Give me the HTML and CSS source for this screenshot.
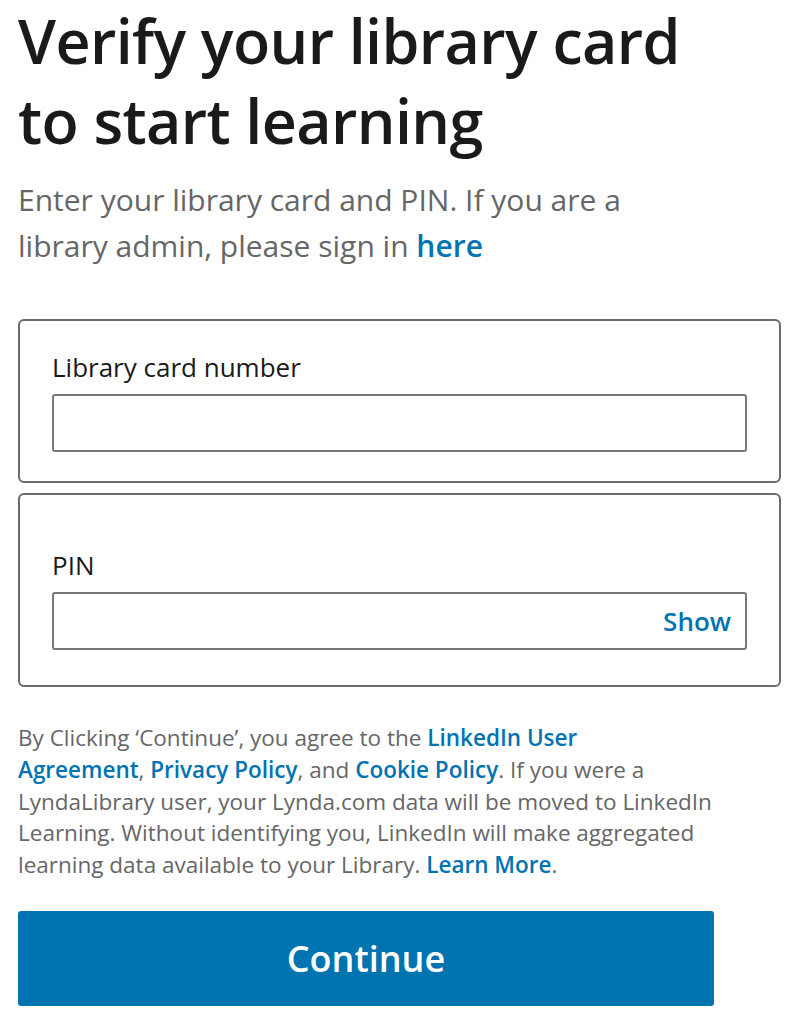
FILE: index.html
```html
<!DOCTYPE html>
<html lang="en">
<head>
<meta charset="utf-8">
<title>Verify your library card</title>
<link rel="stylesheet" href="styles.css">
</head>
<body>
<main class="page">
  <h1 class="title">Verify your library card<br>to start learning</h1>
  <p class="subtitle">Enter your library card and PIN. If you are a<br>library admin, please sign in <a class="link" href="#">here</a></p>
  <form class="form">
    <div class="card card-first">
      <label class="label" for="card">Library card number</label>
      <div class="field"><input class="input" id="card" type="text"></div>
    </div>
    <div class="card card-second">
      <label class="label" for="pin">PIN</label>
      <div class="field"><input class="input" id="pin" type="password"><span class="show">Show</span></div>
    </div>
    <p class="legal">By Clicking ‘Continue’, you agree to the <a class="link" href="#">LinkedIn User<br>Agreement</a>, <a class="link" href="#">Privacy Policy</a>, and <a class="link" href="#">Cookie Policy</a>. If you were a<br>LyndaLibrary user, your Lynda.com data will be moved to LinkedIn<br>Learning. Without identifying you, LinkedIn will make aggregated<br>learning data available to your Library. <a class="link" href="#">Learn More</a>.</p>
    <button class="button" type="button">Continue</button>
  </form>
</main>
</body>
</html>
```
FILE: styles.css
```css
* { box-sizing: border-box; }
html, body { margin: 0; padding: 0; background: #fff; }
body { font-family: "Open Sans", "Noto Sans", sans-serif; color: rgba(0,0,0,0.9); }
.page { width: 763px; margin-left: 18px; padding-top: 1px; }
.title {
  margin: 0;
  font-size: 61px;
  line-height: 80px;
  font-weight: 600;
  letter-spacing: -0.6px;
  color: #1a1a1a;
  white-space: nowrap;
}
.subtitle {
  margin: 16px 0 0;
  font-size: 30px;
  line-height: 46px;
  color: #666;
  white-space: nowrap;
}
.link { color: #0073b1; font-weight: 600; text-decoration: none; }
.form { margin-top: 50px; display: flex; flex-direction: column; }
.card {
  border: 2px solid #6b6b6b;
  border-radius: 6px;
  padding: 0 32px 0 32px;
  display: flex;
  flex-direction: column;
}
.card-first { padding-top: 27.5px; padding-bottom: 29px; }
.card-second { margin-top: 10px; padding-top: 51.5px; padding-bottom: 35px; }
.label { font-size: 26px; line-height: 36px; color: #1a1a1a; margin-bottom: 9.5px; }
.field { position: relative; }
.input {
  display: block;
  width: 100%;
  height: 58px;
  border: 2px solid #777;
  border-radius: 3px;
  background: #fff;
  font: inherit;
  padding: 0 12px;
}
.show {
  position: absolute;
  right: 16px;
  top: 0;
  line-height: 58px;
  font-size: 26px;
  font-weight: 600;
  color: #0073b1;
}
.legal {
  margin: 35px 0 0;
  font-size: 22.5px;
  line-height: 31.75px;
  color: #666;
  white-space: nowrap;
}
.button {
  margin-top: 30px;
  width: 696px;
  height: 95px;
  border: 0;
  border-radius: 3px;
  background: #0073b1;
  color: #fff;
  font-family: inherit;
  font-size: 36px;
  font-weight: 600;
  cursor: pointer;
}
```
